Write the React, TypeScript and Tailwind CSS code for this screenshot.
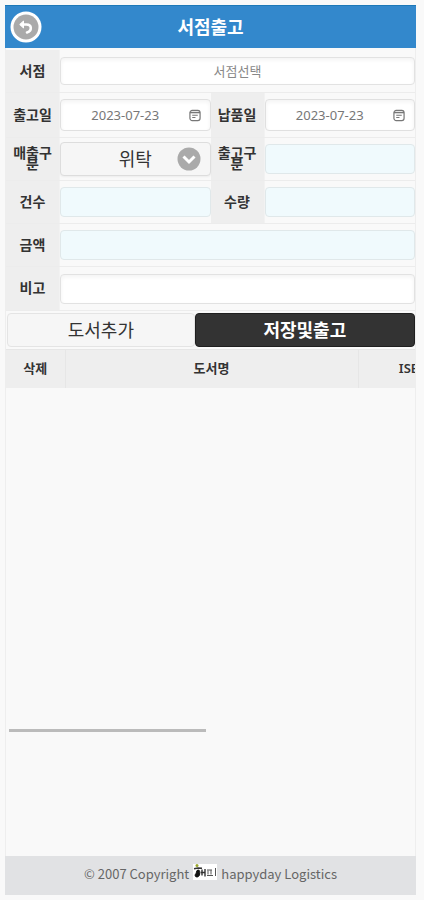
import React from "react";

interface FieldProps {
  id: string;
  label: string;
  children: React.ReactNode;
}

interface InputProps {
  id: string;
  defaultValue?: string;
  readOnly?: boolean;
}

const Field: React.FC<FieldProps> = ({ id, label, children }) => (
  <div className="flex min-w-0 flex-1">
    <label
      htmlFor={id}
      className="flex w-[54px] shrink-0 items-center justify-center border-r border-[#f2f2f2] bg-[#eeeeee] px-1 pb-0.5 text-center text-sm leading-[11px] font-semibold break-all text-[#333]"
    >
      {label}
    </label>
    <div className="relative flex min-w-0 flex-1 items-center">{children}</div>
  </div>
);

const TextInput: React.FC<InputProps> = ({ id, defaultValue, readOnly }) => (
  <input
    id={id}
    type="text"
    defaultValue={defaultValue}
    readOnly={readOnly}
    className="h-[30px] w-full rounded border border-[#e2e2e2] bg-white px-2 text-center text-[13px] text-[#777] shadow-inner read-only:border-[#e0e8ea] read-only:bg-[#f0fafd] read-only:shadow-none"
  />
);

const DateInput: React.FC<InputProps> = ({ id, defaultValue }) => (
  <>
    <input
      id={id}
      type="text"
      defaultValue={defaultValue}
      className="h-8 w-full rounded border border-[#e0e0e0] bg-white pr-6 pl-1 text-center text-[13px] text-[#777] shadow-inner"
    />
    <button type="button" aria-label="달력" className="absolute right-2.5">
      <svg width="12" height="13" viewBox="0 0 13 13" fill="none" stroke="#777">
        <rect x="1" y="1" width="11" height="11" rx="2.5" strokeWidth="1.3" />
        <path d="M1 3.3h11" strokeWidth="1.6" />
        <path d="M3.5 6.2h6M3.5 8.7h3.5" strokeWidth="1.2" />
      </svg>
    </button>
  </>
);

const App: React.FC = () => {
  return (
    <div className="flex min-h-screen flex-col bg-[#f9f9f9] pt-[5px] pr-2 pb-[5px] pl-[5px] font-['Noto_Sans','Noto_Sans_CJK_KR',sans-serif]">
      {/* Title bar */}
      <header className="relative flex h-[43px] items-center justify-center border-t border-[#1c78b8] bg-[#3388cc]">
        <button type="button" aria-label="뒤로" className="absolute left-[5px]">
          <svg width="32" height="32" viewBox="0 0 32 32" fill="none">
            <circle cx="16" cy="16" r="15.5" fill="#fff" />
            <circle cx="16" cy="16" r="12.5" fill="#aaa" />
            <path
              d="M12 13.5h4.500c5.500 0 5.800 6.500.5 8"
              stroke="#fff"
              strokeWidth="2.6"
              strokeLinecap="round"
            />
            <path d="M13.500 10l-3.800 3.500 3.800 3.500z" fill="#fff" stroke="#fff" strokeLinejoin="round" />
          </svg>
        </button>
        <h1 className="text-lg leading-6 font-bold text-white">서점출고</h1>
      </header>

      <main className="flex flex-1 flex-col border-x border-[#eeeeee]">
        {/* Release form */}
        <form className="mt-[2px] divide-y divide-[#ececec] border-b border-[#ececec]">
          <div className="flex h-[43px]">
            <Field id="store" label="서점">
              <input
                id="store"
                type="text"
                placeholder="서점선택"
                className="h-7 w-full rounded border border-[#e2e2e2] bg-white px-2 text-center text-[13px] text-[#777] shadow-inner placeholder:text-[#888]"
              />
            </Field>
          </div>
          <div className="flex h-[45px]">
            <Field id="releaseDate" label="출고일">
              <DateInput id="releaseDate" defaultValue="2023-07-23" />
            </Field>
            <Field id="deliveryDate" label="납품일">
              <DateInput id="deliveryDate" defaultValue="2023-07-23" />
            </Field>
          </div>
          <div className="flex h-[43px]">
            <Field id="salesType" label="매출구분">
              <select
                id="salesType"
                className="h-[34px] w-full appearance-none rounded border border-[#dddddd] bg-[#f6f6f6] px-2 text-center text-lg leading-6 text-[#333] shadow-xs"
              >
                <option>위탁</option>
              </select>
              <svg
                className="pointer-events-none absolute right-2.5"
                width="24"
                height="24"
                viewBox="0 0 24 24"
                fill="none"
              >
                <circle cx="12" cy="12" r="11.5" fill="#aaa" />
                <path d="M6.5 9.5l5.5 5.5 5.5-5.5" stroke="#fff" strokeWidth="3" />
              </svg>
            </Field>
            <Field id="releaseType" label="출고구분">
              <TextInput id="releaseType" readOnly />
            </Field>
          </div>
          <div className="flex h-[43px]">
            <Field id="count" label="건수">
              <TextInput id="count" readOnly />
            </Field>
            <Field id="quantity" label="수량">
              <TextInput id="quantity" readOnly />
            </Field>
          </div>
          <div className="flex h-[43px]">
            <Field id="amount" label="금액">
              <TextInput id="amount" readOnly />
            </Field>
          </div>
          <div className="flex h-[43px]">
            <Field id="note" label="비고">
              <TextInput id="note" />
            </Field>
          </div>
        </form>

        {/* Actions */}
        <div className="mt-[2px] flex h-[34px] pl-px">
          <button
            type="button"
            className="w-[46%] rounded border border-[#e4e4e4] bg-[#f6f6f6] text-lg leading-6 text-[#333]"
          >
            도서추가
          </button>
          <button
            type="button"
            className="flex-1 rounded border border-[#1f1f1f] bg-[#333333] text-lg leading-6 font-bold text-white"
          >
            저장및출고
          </button>
        </div>

        {/* Book list */}
        <div className="mt-[2px] flex flex-1 flex-col justify-between pb-[124px]">
          <div className="overflow-hidden">
            <table className="w-[464px] table-fixed border-t border-[#e6e6e6] bg-[#eeeeee] text-[13px] leading-4 text-[#333]">
              <thead>
                <tr className="h-[38px]">
                  <th className="w-[59px] border-r border-[#e6e6e6] pb-0.5 font-semibold">삭제</th>
                  <th className="w-[293px] border-r border-[#e6e6e6] pb-0.5 font-semibold">도서명</th>
                  <th className="pb-0.5 font-semibold">ISBN</th>
                </tr>
              </thead>
            </table>
          </div>
          <div className="mx-[3px] h-[3px]">
            <div className="h-full w-[49%] bg-[#bbbbbb]" />
          </div>
        </div>
      </main>

      <footer className="flex h-[39px] items-center justify-center gap-1 bg-[#e1e2e4] pb-1 font-['Noto_Sans_CJK_KR',sans-serif] text-[13px] leading-4 text-[#666]">
        <span>© 2007 Copyright</span>
        <svg className="mb-1" width="24" height="16" viewBox="0 0 24 16" fill="none">
          <rect width="24" height="16" fill="#fff" />
          <circle cx="4" cy="1.5" r="1.5" fill="#9aa62c" />
          <path d="M1 4.8l4-.8 4 .3" stroke="#333" strokeWidth="1.6" />
          <path
            d="M4 6.500c2-1 3 0 2.500 2 .8 2-.5 4.500-2.500 4.500s-2.500-2-1-3.500c.8-.8.200-2 1-3z"
            fill="#111"
            stroke="#111"
          />
          <path d="M9 5.500v6M7.500 8.500h4M12 5v7.500" stroke="#333" strokeWidth="1.400" />
          <path d="M14 6h5M15 6.500v4M18 6v4.500M14 11.500h6M22.500 4v8" stroke="#555" />
        </svg>
        <span>happyday Logistics</span>
      </footer>
    </div>
  );
};

export default App;
